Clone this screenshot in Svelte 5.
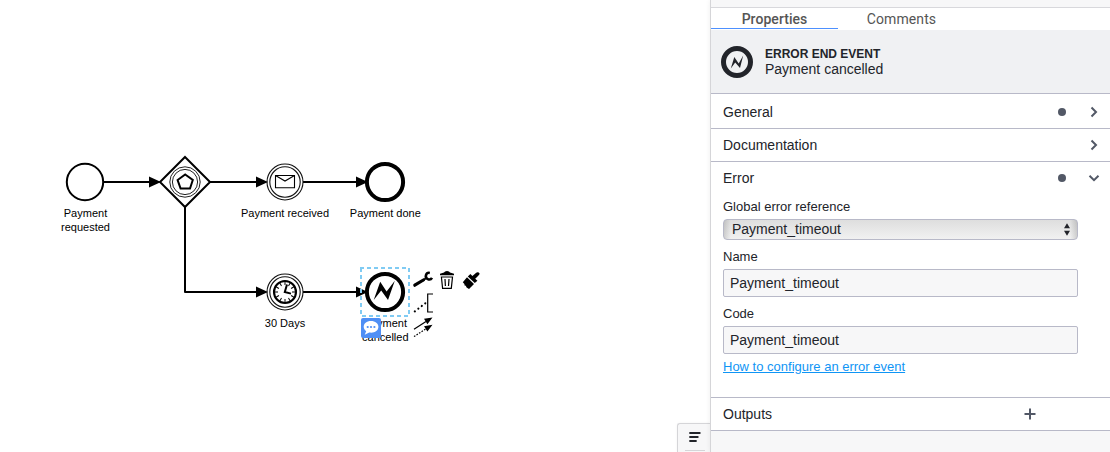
<script>
  const groups = [
    { name: 'General', dot: true, height: 35 },
    { name: 'Documentation', dot: false, height: 33 }
  ];
  const fields = [
    { label: 'Name', value: 'Payment_timeout' },
    { label: 'Code', value: 'Payment_timeout' }
  ];
  const ticks = Array.from({ length: 12 }, (_, i) => i * 30);
  const flows = [
    'M104 182H151',
    'M210 182H258',
    'M303 182H358',
    'M185 207V292H258',
    'M303 292H358'
  ];
  const heads = [
    [160, 182], [267, 182], [367, 182], [267, 292], [367, 292]
  ];
</script>

<div class="app">
  <main class="canvas">
    <svg width="710" height="452" viewBox="0 0 710 452">
      {#each flows as d}<path {d} class="flow" />{/each}
      <g fill="#fff" stroke="#000">
        <circle cx="85" cy="182" r="18.2" stroke-width="2" />
        <path d="M185 157L210 182L185 207L160 182Z" stroke-width="2" />
        <circle cx="185" cy="182" r="15.2" stroke-width="1" stroke="#222" />
        <circle cx="185" cy="182" r="12.6" stroke-width="1" stroke="#222" />
        <path d="M185.2 174.5L192.8 180L190 188.6H180.6L177.6 180Z" stroke-width="2" />
        <circle cx="285" cy="182" r="18" stroke-width="1.1" stroke="#111" />
        <circle cx="285" cy="182" r="15.2" stroke-width="1.1" stroke="#111" />
        <path d="M275.5 175.5H294.5V187.8H275.5ZL285 181L294.5 175.5" stroke-width="1.1" />
        <circle cx="385" cy="182" r="18.1" stroke-width="4" />
        <circle cx="285" cy="292" r="18" stroke-width="1.1" stroke="#111" />
        <circle cx="285" cy="292" r="15.2" stroke-width="1.1" stroke="#111" />
        <circle cx="285" cy="292" r="11" stroke-width="2.1" />
        {#each ticks as a}
          <path d="M285 282V285" stroke-width="1" transform="rotate({a} 285 292)" />
        {/each}
        <path d="M287 284.5L284.8 292L291 293.6" fill="none" stroke-width="2" />
        <circle cx="385" cy="292" r="18.1" stroke-width="4" />
      </g>
      <path d="M373.7 300L380.2 281.8L386.6 291.6L394.8 280.8L388 300L381.2 290.4Z" />
      {#each heads as [x, y]}<path d="M{x + 1} {y}L{x - 11} {y - 5.5}V{y + 5.5}Z" />{/each}
      <rect x="361" y="268" width="48" height="48" fill="none" stroke="#80cbf3" stroke-width="2" stroke-dasharray="4 3" stroke-dashoffset="1" />

      <g class="labels">
        <text x="85.5" y="217">Payment</text>
        <text x="85.5" y="231">requested</text>
        <text x="285" y="217">Payment received</text>
        <text x="385.3" y="217">Payment done</text>
        <text x="285" y="327">30 Days</text>
        <text x="385.3" y="327">Payment</text>
        <text x="385.3" y="341">cancelled</text>
      </g>

      <!-- context pad -->
      <path d="M414.8 285.2L423.4 280" stroke="#000" stroke-width="3.2" stroke-linecap="round" />
      <path d="M422 281L426 278.2" stroke="#000" stroke-width="2" />
      <path d="M429.8 272.9A3.3 3.3 0 1 0 432 277.8" fill="none" stroke="#000" stroke-width="2.6" />
      <path d="M440 275.2V273.8L444 272.6Q444.6 271 447 271Q449.4 271 450 272.6L454 273.8V275.2Z" />
      <g fill="none" stroke="#000">
        <path d="M441.4 277L442.6 288.3H451.3L452.5 277Z" stroke-width="1.2" />
        <path d="M445 279L445.4 286M449 279L448.5 286" stroke-width="1.2" />
        <path d="M414.8 311.4L425.4 303.2" stroke-width="2.1" stroke-linecap="round" stroke-dasharray="0.1 4.3" />
        <path d="M433 294H427.7V312H433" stroke-width="1.2" />
        <path d="M414 329.3L426 321.6" stroke-width="1.2" />
        <path d="M414 336.6L426 328.8" stroke-width="1.2" stroke-dasharray="1.6 1.4" />
      </g>
      <path d="M432.5 317.5L424 318.8L427.4 324.2ZM432.5 324.8L424 326.2L427.4 331.6Z" />
      <path d="M475.6 273.2Q478.2 271 479.6 273.6Q480 274.6 475.2 278.7L477.4 280.7L474.8 283.1L467.8 276.4L470.4 274L472.4 276Z" />
      <path d="M467 277.2L474 284L469 289L466.6 287.4L465.8 285.8L464.6 285.6L464.4 284L462.8 282.2Z" />

      <rect x="361" y="318" width="20" height="20" rx="2" fill="#4f8ff5" />
      <path d="M371 321C366.5 321 363.7 323.6 363.7 326.8C363.7 328.7 364.7 330.2 366.2 331.3L364.7 334.7L369.2 332.5C374.3 333.3 378.4 330.8 378.4 326.8C378.4 323.5 375.3 321 371 321Z" fill="#fff" />
      <g fill="#4f8ff5">
        <circle cx="367.7" cy="327" r="1.1" />
        <circle cx="371" cy="327" r="1.1" />
        <circle cx="374.4" cy="327" r="1.1" />
      </g>
    </svg>
    <button class="toggle" aria-label="Toggle panel">
      <svg width="12" height="11" viewBox="0 0 12 11"><path d="M1 1H10.8M1 5H8.8M1 9H7" stroke="#22242a" stroke-width="1.8" stroke-linecap="round" /></svg>
      <span></span>
    </button>
  </main>

  <aside class="panel">
    <div class="topbar"></div>
    <nav class="tabs">
      <div class="tab active"><span>Properties</span></div>
      <div class="tab"><span>Comments</span></div>
    </nav>
    <header class="element">
      <svg width="32" height="32" viewBox="0 0 32 32">
        <circle cx="16" cy="16" r="13.5" fill="none" stroke="#22242a" stroke-width="5" />
        <path d="M9.8 22.5L13.3 11L17.7 17.4L22.2 9.5L19 22L14.2 16.4Z" fill="#22242a" />
      </svg>
      <div>
        <div class="type">ERROR END EVENT</div>
        <div class="title">Payment cancelled</div>
      </div>
    </header>

    {#each groups as g}
      <section class="group" class:first={g.height > 33} style="height: {g.height}px">
        <span class="name">{g.name}</span>
        {#if g.dot}<i class="dot"></i>{/if}
        <svg class="chevron" width="12" height="12" viewBox="0 0 12 12"><path d="M3.5 1.5L8 6L3.5 10.5" /></svg>
      </section>
    {/each}

    <section class="error">
      <div class="group open">
        <span class="name">Error</span>
        <i class="dot"></i>
        <svg class="chevron" width="12" height="12" viewBox="0 0 12 12"><path d="M1.5 3.8L6 8.2L10.5 3.8" /></svg>
      </div>
      <div class="body">
        <div class="label">Global error reference</div>
        <div class="select">
          <span>Payment_timeout</span>
          <svg width="6" height="13" viewBox="0 0 6 13"><path d="M0 5.3L3 .3L6 5.3ZM0 7.7L3 12.7L6 7.7Z" fill="#22242a" /></svg>
        </div>
        {#each fields as f}
          <div class="label">{f.label}</div>
          <div class="input">{f.value}</div>
        {/each}
        <span class="link">How to configure an error event</span>
      </div>
    </section>

    <section class="group outputs">
      <span class="name">Outputs</span>
      <svg class="plus" width="12" height="12" viewBox="0 0 12 12"><path d="M6 .5V11.5M.5 6H11.5" /></svg>
    </section>
  </aside>
</div>

<style>
  .app {
    display: flex;
    width: 1110px;
    height: 452px;
    overflow: hidden;
    background: #fff;
    color: #22242a;
    font-family: "Liberation Sans", Arial, sans-serif;
    font-size: 14px;
  }
  .app * { box-sizing: border-box; }
  .canvas { position: relative; width: 710px; height: 452px; }
  .canvas > svg { display: block; }
  .flow { fill: none; stroke: #000; stroke-width: 2; stroke-linejoin: round; }
  .labels { font-size: 11px; text-anchor: middle; fill: #000; }
  .toggle {
    position: absolute;
    right: 0;
    bottom: 0;
    width: 33px;
    height: 29px;
    padding: 8px 5px 0 6px;
    display: flex;
    flex-direction: column;
    align-items: center;
    justify-content: space-between;
    background: #f7f7f8;
    border: 1px solid #d5d5d8;
    border-width: 1px 0 0 1px;
    border-radius: 3px 0 0 0;
    box-shadow: 0 0 3px #0000000d;
  }
  .toggle svg { display: block; }
  .toggle span { width: 20px; height: 1px; background: #d5d5d8; margin-bottom: 1px; }
  .panel {
    width: 400px;
    background: #f7f7f8;
    border-left: 1px solid #d5d5d8;
    box-shadow: 0 0 5px #00000012;
    z-index: 1;
  }
  .topbar { height: 8px; border-bottom: 1px solid #d8d8dc; }
  .tabs {
    display: flex;
    height: 22px;
    background: #fff;
    font-family: Roboto, sans-serif;
    color: #555;
    letter-spacing: .1px;
  }
  .tab { width: 127px; height: 21px; line-height: 23px; text-align: center; }
  .active { font-weight: 500; border-bottom: 1px solid #4d90ff; letter-spacing: .05px; }
  .element {
    display: flex;
    align-items: center;
    gap: 12px;
    height: 64px;
    padding: 0 10px;
    background: #f0f1f3;
    border-bottom: 1px solid #b8b9c8;
  }
  .element svg { margin-top: 1px; }
  .type { font-size: 12px; font-weight: 700; line-height: 16px; }
  .title { line-height: 15px; padding-bottom: 1px; }
  .group {
    display: flex;
    align-items: center;
    height: 33px;
    padding: 0 10px 0 12px;
    background: #fff;
    border-bottom: 1px solid #b8b9c8;
  }
  .group.first { padding-top: 1px; }
  .name { flex: 1; line-height: 16px; padding-bottom: 1px; }
  .first .name { padding-bottom: 0; }
  .dot { width: 8px; height: 8px; margin-right: 22px; border-radius: 50%; background: #525866; }
  .chevron, .plus { fill: none; stroke: #525866; stroke-width: 2; }
  .error { height: 236px; background: #fff; border-bottom: 1px solid #b8b9c8; }
  .open { height: 32px; border-bottom: 0; }
  .body { padding: 5px 32px 0 12px; }
  .label { height: 20px; font-size: 13px; line-height: 16px; }
  .select {
    display: flex;
    align-items: center;
    justify-content: space-between;
    height: 21px;
    margin-bottom: 9px;
    padding: 0 6px 0 8px;
    border: 1px solid #b8b9c8;
    border-radius: 4px;
    background: linear-gradient(90deg, #0002, #0000 7px calc(100% - 7px), #0002), linear-gradient(#dedede, #f1f1f1);
  }
  .select span { line-height: 15px; padding-bottom: 1px; }
  .select svg { margin-right: 1px; }
  .input {
    height: 28px;
    margin-bottom: 9px;
    padding-left: 6px;
    line-height: 26px;
    background: #f7f7f8;
    border: 1px solid #b8b9c8;
    border-radius: 2px;
  }
  .link {
    display: block;
    margin-top: -4px;
    font-size: 13px;
    line-height: 16px;
    color: #0f95f5;
    text-decoration: underline;
  }
  .plus { margin-right: 64px; }
</style>
